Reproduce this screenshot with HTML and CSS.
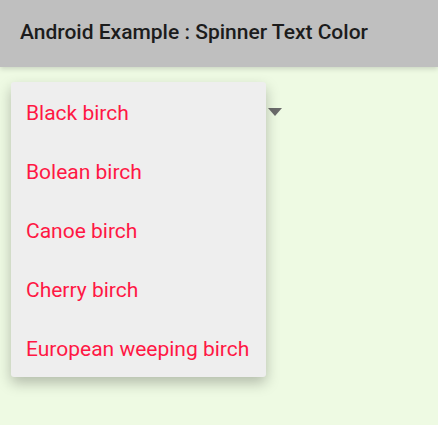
FILE: index.html
```html
<!DOCTYPE html>
<html lang="en">
<head>
    <meta charset="UTF-8">
    <meta name="viewport" content="width=device-width, initial-scale=1.0">
    <title>Spinner Text Color</title>
    <link rel="stylesheet" href="styles.css">
</head>
<body>
    <div class="toolbar">Android Example : Spinner Text Color</div>
    <div class="content">
        <div class="spinner">
            <div class="spinner-value"></div>
            <span class="arrow"></span>
            <!-- popup list shown over the spinner -->
            <ul class="dropdown">
                <li>Black birch</li>
                <li>Bolean birch</li>
                <li>Canoe birch</li>
                <li>Cherry birch</li>
                <li>European weeping birch</li>
            </ul>
        </div>
    </div>
</body>
</html>
```

FILE: styles.css
```css
body {
    margin: 0;
    font-family: Roboto, "Noto Sans", sans-serif;
    background-color: #eefae3;
    height: 100vh;
    overflow: hidden;
}
.toolbar {
    height: 67px;
    line-height: 64px;
    padding-left: 20px;
    background: #bfbfbf;
    color: #1c1c1c;
    font-size: 21px;
    font-weight: 500;
    box-shadow: 0px 2px 5px rgba(0, 0, 0, 0.15);
    position: relative;
    z-index: 1;
}
.content {
    padding: 15px 11px;
}
.spinner {
    position: relative;
    display: flex;
    align-items: center;
    width: 271px;
    height: 50px;
}
.spinner-value {
    flex: 1;
}
.arrow {
    width: 0;
    height: 0;
    border-left: 7px solid transparent;
    border-right: 7px solid transparent;
    border-top: 8px solid #6b6b6b;
    margin-top: 10px;
}
.dropdown {
    position: absolute;
    top: 0;
    left: 0;
    margin: 0;
    padding: 0;
    list-style: none;
    width: 255px;
    background: #eeeeee;
    border-radius: 3px;
    box-shadow: 0px 6px 14px rgba(0, 0, 0, 0.25);
    z-index: 2;
}
.dropdown li {
    height: 59px;
    line-height: 63px;
    padding-left: 15px;
    font-size: 21px;
    color: #ff1744;
    white-space: nowrap;
}
```
